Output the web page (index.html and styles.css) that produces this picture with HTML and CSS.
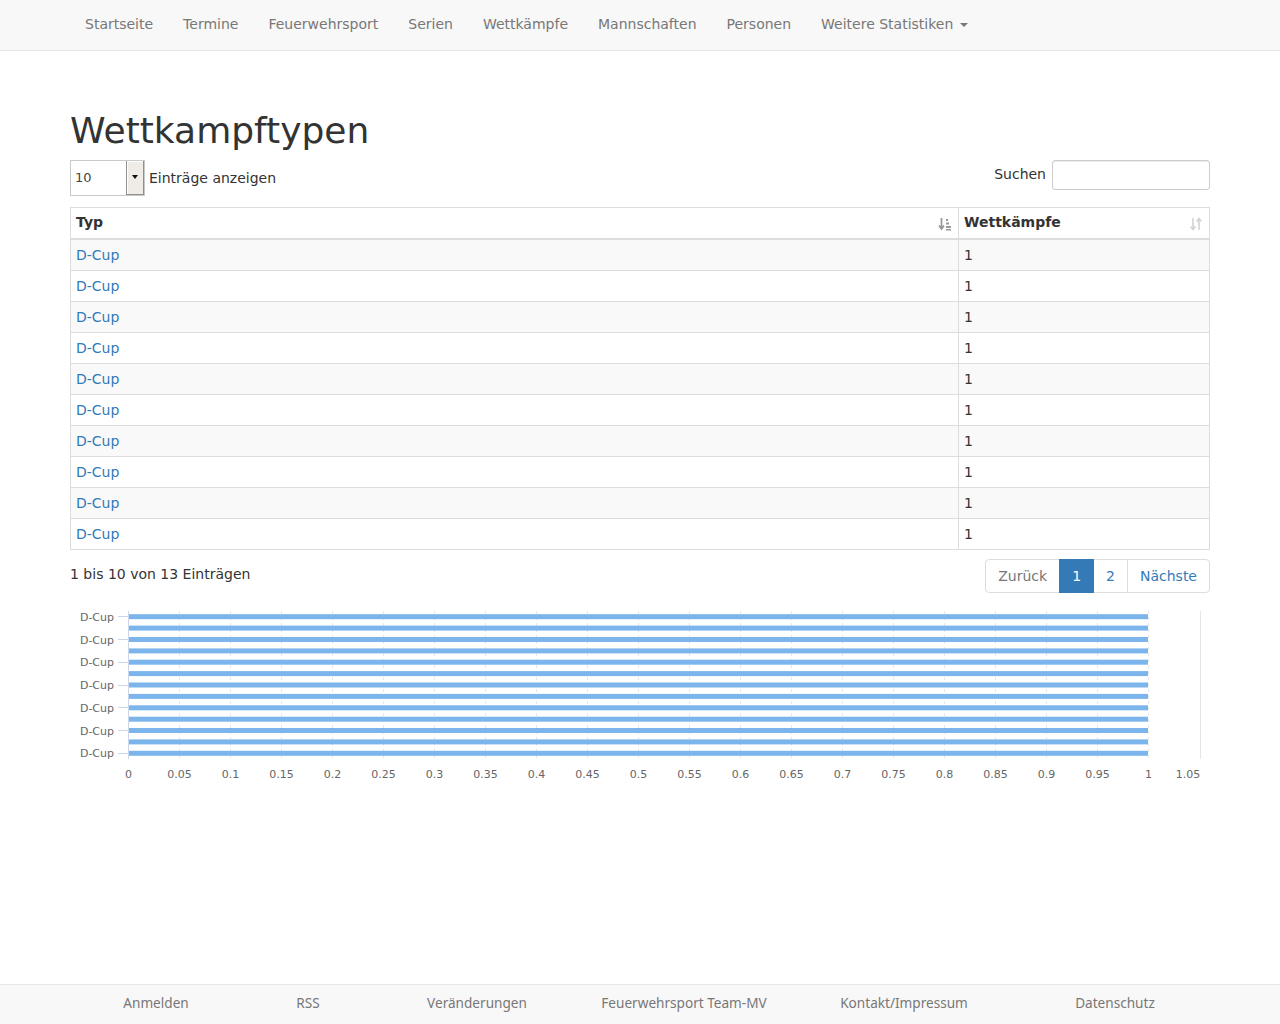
FILE: index.html
```html
<!DOCTYPE html>
<html lang="de">
<head>
<meta charset="utf-8">
<title>Wettkampftypen</title>
<link rel="stylesheet" href="styles.css">
</head>
<body>
<nav class="navbar">
  <div class="container">
    <ul class="nav">
      <li><a href="#">Startseite</a></li>
      <li><a href="#">Termine</a></li>
      <li><a href="#">Feuerwehrsport</a></li>
      <li><a href="#">Serien</a></li>
      <li><a href="#">Wettkämpfe</a></li>
      <li><a href="#">Mannschaften</a></li>
      <li><a href="#">Personen</a></li>
      <li><a href="#">Weitere Statistiken <span class="caret"></span></a></li>
    </ul>
  </div>
</nav>

<main class="container main">
  <h1>Wettkampftypen</h1>
  <div class="controls">
    <div class="length">
      <div class="fake-select">
        <span class="fs-value">10</span>
        <span class="fs-btn"><span class="fs-arrow"></span></span>
      </div>
      <span class="length-label">Einträge anzeigen</span>
    </div>
    <div class="search">
      <span>Suchen</span>
      <input type="text" class="search-input">
    </div>
  </div>

  <table class="dt">
    <thead>
      <tr>
        <th class="col-typ">Typ
          <svg class="sort sort-asc" width="14" height="14" viewBox="0 0 14 14"><path d="M3.5 1v10M1 8.5l2.5 3.5L6 8.5" fill="none" stroke="#999" stroke-width="1.8"/><rect x="8" y="2" width="2" height="2" fill="#999"/><rect x="8" y="5.5" width="3" height="2" fill="#999"/><rect x="8" y="9" width="5" height="2" fill="#999"/><rect x="8" y="12" width="5" height="1.5" fill="#999"/></svg>
        </th>
        <th class="col-num">Wettkämpfe
          <svg class="sort sort-both" width="14" height="14" viewBox="0 0 14 14"><path d="M4 1v11M1.5 9.5L4 12.5l2.5-3M10 13V2M7.5 4.5L10 1.5l2.5 3" fill="none" stroke="#d4d4d4" stroke-width="1.6"/></svg>
        </th>
      </tr>
    </thead>
    <tbody>
      <tr><td><a href="#">D-Cup</a></td><td>1</td></tr>
      <tr><td><a href="#">D-Cup</a></td><td>1</td></tr>
      <tr><td><a href="#">D-Cup</a></td><td>1</td></tr>
      <tr><td><a href="#">D-Cup</a></td><td>1</td></tr>
      <tr><td><a href="#">D-Cup</a></td><td>1</td></tr>
      <tr><td><a href="#">D-Cup</a></td><td>1</td></tr>
      <tr><td><a href="#">D-Cup</a></td><td>1</td></tr>
      <tr><td><a href="#">D-Cup</a></td><td>1</td></tr>
      <tr><td><a href="#">D-Cup</a></td><td>1</td></tr>
      <tr><td><a href="#">D-Cup</a></td><td>1</td></tr>
    </tbody>
  </table>

  <div class="table-footer">
    <div class="info">1 bis 10 von 13 Einträgen</div>
    <ul class="pagination">
      <li class="disabled"><a href="#">Zurück</a></li>
      <li class="active"><a href="#">1</a></li>
      <li><a href="#">2</a></li>
      <li><a href="#">Nächste</a></li>
    </ul>
  </div>

  <svg class="chart" width="1140" height="190" viewBox="0 0 1140 190">
    <g class="grid" stroke="#e6e6e6" stroke-width="1" stroke-dasharray="3,3">
      <line x1="109.5" y1="11" x2="109.5" y2="159"/>
      <line x1="160.5" y1="11" x2="160.5" y2="159"/>
      <line x1="211.5" y1="11" x2="211.5" y2="159"/>
      <line x1="262.5" y1="11" x2="262.5" y2="159"/>
      <line x1="313.5" y1="11" x2="313.5" y2="159"/>
      <line x1="364.5" y1="11" x2="364.5" y2="159"/>
      <line x1="415.5" y1="11" x2="415.5" y2="159"/>
      <line x1="466.5" y1="11" x2="466.5" y2="159"/>
      <line x1="517.5" y1="11" x2="517.5" y2="159"/>
      <line x1="568.5" y1="11" x2="568.5" y2="159"/>
      <line x1="619.5" y1="11" x2="619.5" y2="159"/>
      <line x1="670.5" y1="11" x2="670.5" y2="159"/>
      <line x1="721.5" y1="11" x2="721.5" y2="159"/>
      <line x1="772.5" y1="11" x2="772.5" y2="159"/>
      <line x1="823.5" y1="11" x2="823.5" y2="159"/>
      <line x1="874.5" y1="11" x2="874.5" y2="159"/>
      <line x1="925.5" y1="11" x2="925.5" y2="159"/>
      <line x1="976.5" y1="11" x2="976.5" y2="159"/>
      <line x1="1027.5" y1="11" x2="1027.5" y2="159"/>
      <line x1="1078.5" y1="11" x2="1078.5" y2="159"/>
    </g>
    <line x1="1130.5" y1="11" x2="1130.5" y2="159" stroke="#e6e6e6" stroke-width="1"/>
    <g class="bars" fill="#7cb5ec">
      <rect x="58" y="14.2" width="1020" height="5"/>
      <rect x="58" y="25.6" width="1020" height="5"/>
      <rect x="58" y="37" width="1020" height="5"/>
      <rect x="58" y="48.4" width="1020" height="5"/>
      <rect x="58" y="59.7" width="1020" height="5"/>
      <rect x="58" y="71.1" width="1020" height="5"/>
      <rect x="58" y="82.5" width="1020" height="5"/>
      <rect x="58" y="93.9" width="1020" height="5"/>
      <rect x="58" y="105.3" width="1020" height="5"/>
      <rect x="58" y="116.7" width="1020" height="5"/>
      <rect x="58" y="128" width="1020" height="5"/>
      <rect x="58" y="139.4" width="1020" height="5"/>
      <rect x="58" y="150.8" width="1020" height="5"/>
    </g>
    <g stroke="#ccd6eb" stroke-width="1">
      <line x1="58.5" y1="11" x2="58.5" y2="159"/>
      <line x1="48" y1="16.5" x2="58" y2="16.5"/>
      <line x1="48" y1="39.5" x2="58" y2="39.5"/>
      <line x1="48" y1="62.5" x2="58" y2="62.5"/>
      <line x1="48" y1="85.5" x2="58" y2="85.5"/>
      <line x1="48" y1="107.5" x2="58" y2="107.5"/>
      <line x1="48" y1="130.5" x2="58" y2="130.5"/>
      <line x1="48" y1="153.5" x2="58" y2="153.5"/>
    </g>
    <g class="ylabels" text-anchor="end">
      <text x="44" y="20.7">D-Cup</text>
      <text x="44" y="43.5">D-Cup</text>
      <text x="44" y="66.2">D-Cup</text>
      <text x="44" y="89">D-Cup</text>
      <text x="44" y="111.8">D-Cup</text>
      <text x="44" y="134.5">D-Cup</text>
      <text x="44" y="157.3">D-Cup</text>
    </g>
    <g class="xlabels" text-anchor="middle">
      <text x="58.5" y="178">0</text>
      <text x="109.5" y="178">0.05</text>
      <text x="160.5" y="178">0.1</text>
      <text x="211.5" y="178">0.15</text>
      <text x="262.5" y="178">0.2</text>
      <text x="313.5" y="178">0.25</text>
      <text x="364.5" y="178">0.3</text>
      <text x="415.5" y="178">0.35</text>
      <text x="466.5" y="178">0.4</text>
      <text x="517.5" y="178">0.45</text>
      <text x="568.5" y="178">0.5</text>
      <text x="619.5" y="178">0.55</text>
      <text x="670.5" y="178">0.6</text>
      <text x="721.5" y="178">0.65</text>
      <text x="772.5" y="178">0.7</text>
      <text x="823.5" y="178">0.75</text>
      <text x="874.5" y="178">0.8</text>
      <text x="925.5" y="178">0.85</text>
      <text x="976.5" y="178">0.9</text>
      <text x="1027.5" y="178">0.95</text>
      <text x="1078.5" y="178">1</text>
      <text x="1118" y="178">1.05</text>
    </g>
  </svg>
</main>

<footer class="footer">
  <div class="footer-inner">
    <a href="#">Anmelden</a>
    <a href="#">RSS</a>
    <a href="#">Veränderungen</a>
    <a href="#">Feuerwehrsport Team-MV</a>
    <a href="#">Kontakt/Impressum</a>
    <a href="#">Datenschutz</a>
  </div>
</footer>
</body>
</html>
```

FILE: styles.css
```css
* { box-sizing: border-box; }

html, body { height: 100%; }

body {
  margin: 0;
  font-family: "DejaVu Sans", sans-serif;
  font-size: 14px;
  line-height: 20px;
  color: #333;
  background: #fff;
  display: flex;
  flex-direction: column;
  min-height: 100vh;
}

a { text-decoration: none; }

.container {
  width: 1170px;
  margin: 0 auto;
  padding: 0 15px;
}

/* Navbar */
.navbar {
  background: #f8f8f8;
  border-bottom: 1px solid #e7e7e7;
  height: 51px;
  flex: none;
}
.nav {
  list-style: none;
  margin: 0;
  padding: 0;
  display: flex;
}
.nav a {
  display: block;
  padding: 14px 15px 16px;
  line-height: 20px;
  color: #777;
}
.caret {
  display: inline-block;
  width: 0;
  height: 0;
  margin-left: 2px;
  vertical-align: middle;
  border-top: 4px solid #777;
  border-left: 4px solid transparent;
  border-right: 4px solid transparent;
}

/* Main */
.main {
  padding-top: 40px;
  flex: none;
}
h1 {
  font-size: 36px;
  font-weight: normal;
  line-height: 1.1;
  margin: 20px 0 9px;
  color: #333;
}

.controls {
  display: flex;
  justify-content: space-between;
  align-items: flex-start;
  height: 41px;
}
.length {
  display: flex;
  align-items: center;
  height: 36px;
}
.fake-select {
  width: 75px;
  height: 36px;
  border: 1px solid #c9c9c9;
  background: #fff;
  display: flex;
  align-items: stretch;
}
.fs-value {
  flex: 1;
  font-size: 13px;
  color: #444;
  padding-left: 4px;
  line-height: 34px;
}
.fs-btn {
  width: 18px;
  background: #efebe7;
  border-left: 1px solid #8f8f8f;
  border-right: 1px solid #8f8f8f;
  border-bottom: 1px solid #8f8f8f;
  box-shadow: inset 1px 1px 0 #fff;
  display: flex;
  align-items: center;
  justify-content: center;
}
.fs-arrow {
  width: 0;
  height: 0;
  border-top: 4px solid #111;
  border-left: 3.5px solid transparent;
  border-right: 3.5px solid transparent;
}
.length-label {
  margin-left: 4px;
  color: #333;
}
.search {
  display: flex;
  align-items: center;
  height: 30px;
  gap: 6px;
}
.search span { position: relative; top: -1px; }
.search-input {
  width: 158px;
  height: 30px;
  border: 1px solid #ccc;
  border-radius: 3px;
  padding: 5px 10px;
  font: inherit;
  font-size: 12px;
  box-shadow: inset 0 1px 1px rgba(0,0,0,.075);
  outline: none;
}

/* Table */
.dt {
  width: 100%;
  border-collapse: collapse;
  border: 1px solid #ddd;
  margin-top: 6px;
}
.dt th, .dt td {
  border: 1px solid #ddd;
  padding: 5px;
  line-height: 20px;
  text-align: left;
  vertical-align: top;
}
.dt thead th {
  border-bottom: 2px solid #ddd;
  font-weight: bold;
  position: relative;
  padding: 4px 30px 6px 5px;
}
.col-typ { width: 888px; }
.sort {
  position: absolute;
  right: 6px;
  top: 9px;
}
.dt tbody tr:nth-child(odd) { background: #f9f9f9; }
.dt td a { color: #337ab7; }

/* Info / pagination */
.table-footer {
  display: flex;
  justify-content: space-between;
  align-items: flex-start;
  margin-top: 9px;
}
.info { padding-top: 5px; }
.pagination {
  list-style: none;
  margin: 0;
  padding: 0;
  display: flex;
}
.pagination li a {
  display: block;
  padding: 6px 12px 6px;
  line-height: 20px;
  border: 1px solid #ddd;
  margin-left: -1px;
  color: #337ab7;
  background: #fff;
}
.pagination li:first-child a {
  margin-left: 0;
  border-radius: 4px 0 0 4px;
}
.pagination li:last-child a { border-radius: 0 4px 4px 0; }
.pagination li.disabled a { color: #777; }
.pagination li.active a {
  background: #337ab7;
  border-color: #337ab7;
  color: #fff;
  position: relative;
}

/* Chart */
.chart {
  display: block;
  margin-top: 7px;
  font-family: "DejaVu Sans", sans-serif;
  font-size: 11px;
}
.chart text { fill: #666; }

/* Footer */
.footer {
  margin-top: auto;
  background: #f8f8f8;
  border-top: 1px solid #e7e7e7;
  flex: none;
}
.footer-inner {
  width: 1140px;
  margin: 0 auto;
  height: 39px;
  padding-top: 8px;
  display: grid;
  grid-template-columns: 172px 132px 206px 208px 232px 190px;
  align-items: start;
  text-align: center;
  font-family: "Noto Sans", sans-serif;
  font-size: 13.6px;
  line-height: 20px;
}
.footer-inner a { color: #777; }
```
